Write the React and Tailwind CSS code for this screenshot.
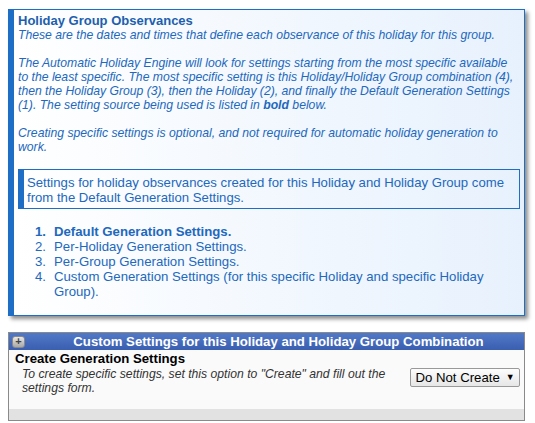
export default function App() {
  const items = [
    ["1.", "Default Generation Settings.", true],
    ["2.", "Per-Holiday Generation Settings.", false],
    ["3.", "Per-Group Generation Settings.", false],
    ["4.", "Custom Generation Settings (for this specific Holiday and specific Holiday Group).", false],
  ];
  return (
    <div className="w-[535px] h-[423px] bg-white font-['Liberation_Sans',Arial,sans-serif] overflow-hidden">
      <div className="pl-2 pt-[9px]">
        <div className="w-[517px] border border-[#1f6ec6] border-l-[6px] bg-gradient-to-r from-[#ffffff] to-[#e7f1fd] shadow-[3px_3px_4px_rgba(0,0,0,0.45)] pl-1 pr-1 pt-[3px] pb-[16px] text-[#2268bd]">
          <div className="text-[13px] leading-[15px] font-bold text-[#1d5fae]">Holiday Group Observances</div>
          <div className="italic text-[12.2px] leading-[14px]">
            <p>These are the dates and times that define each observance of this holiday for this group.</p>
            <p className="mt-[14px]">
              The Automatic Holiday Engine will look for settings starting from the most specific available to the least specific. The most specific setting is this Holiday/Holiday Group combination (4), then the Holiday Group (3), then the Holiday (2), and finally the Default Generation Settings (1). The setting source being used is listed in <b>bold</b> below.
            </p>
            <p className="mt-[14px]">Creating specific settings is optional, and not required for automatic holiday generation to work.</p>
          </div>
          <div className="mt-[15px] border border-[#1f6ec6] border-l-[6px] pl-[3px] pr-2 pt-[5px] pb-[3px] text-[13.15px] leading-[15px]">
            Settings for holiday observances created for this Holiday and Holiday Group come from the Default Generation Settings.
          </div>
          <ol className="mt-[15px] text-[13.2px] leading-[15px]">
            {items.map(([n, t, b]) => (
              <li key={n} className={"flex pl-[17px] " + (b ? "font-bold" : "")}>
                <span className="w-[19px] shrink-0">{n}</span>
                <span>{t}</span>
              </li>
            ))}
          </ol>
        </div>
      </div>
      <div className="pl-2 mt-[16px]">
        <div className="w-[517px] border border-[#8a8a8a] bg-[#fafafa]">
          <div className="flex items-center h-[17px] bg-gradient-to-b from-[#5279c8] to-[#3a5eb0]">
            <div className="ml-[3px] w-[13px] h-[12px] rounded-[3px] bg-gradient-to-b from-[#e8e8e8] to-[#a8a8a8] border border-[#8a8a8a] flex items-center justify-center text-[#444] text-[11px] leading-none font-bold">+</div>
            <div className="flex-1 text-center text-white font-bold text-[13.2px] leading-[15px] pl-[8px]">Custom Settings for this Holiday and Holiday Group Combination</div>
          </div>
          <div className="pl-[6px] pt-[1px] text-[13.2px] leading-[15px] font-bold text-black">Create Generation Settings</div>
          <div className="flex items-start justify-between pl-[13px] pr-[4px]">
            <div className="italic text-[12.2px] leading-[14px] text-[#333] w-[390px] pt-[1px]">
              To create specific settings, set this option to "Create" and fill out the settings form.
            </div>
            <div className="mt-[2px] h-[19px] w-[110px] border border-[#999] rounded-[2px] bg-gradient-to-b from-[#fdfdfd] to-[#e6e6e6] flex items-center pl-[4px] text-[13.2px] text-black">
              <span>Do Not Create</span>
              <span className="ml-[6px] text-[9px]">▼</span>
            </div>
          </div>
          <div className="mt-[14px] h-[11px] bg-[#e2e2e2]"></div>
        </div>
      </div>
    </div>
  );
}
